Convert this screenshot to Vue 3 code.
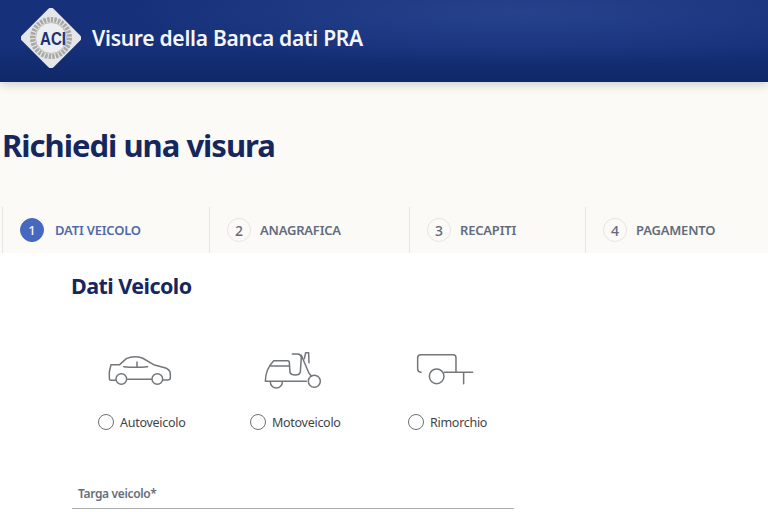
<script setup>
const steps = [
  { n: 1, label: 'DATI VEICOLO', active: true },
  { n: 2, label: 'ANAGRAFICA' },
  { n: 3, label: 'RECAPITI' },
  { n: 4, label: 'PAGAMENTO' }
]
</script>

<template>
  <div class="page">
    <header class="top">
      <svg class="logo" viewBox="0 0 60 60" width="60" height="60" aria-hidden="true">
        <rect x="7.5" y="7.5" width="45" height="45" rx="4" transform="rotate(45 30 30)" fill="#e4e6ea" />
        <circle cx="30" cy="30" r="18.5" fill="none" stroke="#a8a8a4" stroke-width="5" stroke-dasharray="2.4 1.2" />
        <circle cx="30" cy="30" r="15.5" fill="#eceef0" stroke="#bdbdb9" stroke-width="1" />
        <text x="32" y="36.5" class="logo-text" text-anchor="middle" textLength="26" lengthAdjust="spacingAndGlyphs">ACI</text>
      </svg>
      <span class="brand">Visure della Banca dati PRA</span>
    </header>

    <section class="intro">
      <h1>Richiedi una visura</h1>
      <nav class="steps">
        <div v-for="s in steps" :key="s.n" class="step" :class="{ active: s.active }">
          <span class="num">{{ s.n }}</span>
          <span class="lbl">{{ s.label }}</span>
        </div>
      </nav>
    </section>

    <main class="main">
      <h2>Dati Veicolo</h2>
      <div class="types">
        <label class="type">
          <svg class="ico" viewBox="50 38 198 96" width="66" height="32" fill="none" stroke="#73767a" stroke-width="4.5" stroke-linejoin="round" stroke-linecap="round">
            <path d="M76 117H62Q57 117 57 111V92L62 70H88L108 52Q130 42 156 50L190 70L226 80Q240 86 240 98V110Q240 116 232 116H219M111 114H183" />
            <circle cx="93" cy="113" r="16" />
            <circle cx="201" cy="113" r="16" />
            <path d="M100 76Q135 80 172 76M140 62V76" />
          </svg>
          <span class="pick"><i class="radio"></i><span>Autoveicolo</span></span>
        </label>
        <label class="type moto">
          <svg class="ico" viewBox="68 28 180 118" width="60" height="39.3" fill="none" stroke="#73767a" stroke-width="4.5" stroke-linejoin="round" stroke-linecap="round">
            <path d="M75 122Q75 86 100 60H142Q147 60 147 66L149 96Q152 103 165 103Q178 103 180 94L183 50Q181 40 172 40H156M183 44L206 98L213 106M75 122H198" />
            <path d="M90 76H146M192 54L196 36H205L206 66" />
            <path d="M90 124A18 18 0 0 0 126 124" />
            <circle cx="222" cy="122" r="18" />
          </svg>
          <span class="pick"><i class="radio"></i><span>Motoveicolo</span></span>
        </label>
        <label class="type trailer">
          <svg class="ico" viewBox="50 38 175 96" width="58.3" height="32" fill="none" stroke="#73767a" stroke-width="4.5" stroke-linejoin="round" stroke-linecap="round">
            <path d="M65 96Q55 94 55 86V52Q55 43 64 43H162Q170 43 170 52V96" />
            <path d="M135 96H220M193 96V130" />
            <circle cx="112" cy="108" r="22" />
          </svg>
          <span class="pick"><i class="radio"></i><span>Rimorchio</span></span>
        </label>
      </div>
      <div class="field"><span>Targa veicolo*</span></div>
    </main>
  </div>
</template>

<style scoped>
.page {
  width: 768px;
  height: 512px;
  overflow: hidden;
  background: #fff;
  font-family: "Noto Sans", "Open Sans", sans-serif;
}
.top {
  height: 82px;
  box-sizing: border-box;
  padding-left: 21px;
  display: flex;
  align-items: center;
  gap: 11px;
  background:
    radial-gradient(ellipse 400px 55px at 520px 12px, rgba(62, 92, 165, 0.42), rgba(62, 92, 165, 0) 100%),
    linear-gradient(#17307a, #16307a 55%, #0f2868);
  box-shadow: 0 2px 10px rgba(60, 60, 60, 0.25);
  position: relative;
}
.logo { flex: none; margin-top: -6px; }
.logo-text {
  font: 700 18px "Liberation Sans", sans-serif;
  fill: #1b3272;
}
.brand {
  color: #f4f6fa;
  font-size: 21px;
  font-weight: 600;
  letter-spacing: -0.27px;
  margin-top: -6px;
}
.intro {
  height: 171px;
  box-sizing: border-box;
  padding-top: 42px;
  background: #fbfaf6;
  display: flex;
  flex-direction: column;
}
h1 {
  margin: 0 0 0 2px;
  height: 42px;
  line-height: 42px;
  font-size: 31px;
  font-weight: 700;
  letter-spacing: -1px;
  color: #16275e;
}
.steps {
  margin-top: auto;
  padding-left: 2px;
  height: 46px;
  display: grid;
  grid-template-columns: 207px 200px 176px 1fr;
}
.step {
  border-left: 1px solid #e7e6e2;
  padding-left: 17px;
  display: flex;
  align-items: center;
  gap: 9px;
  color: #626b7c;
  font-size: 13px;
  font-weight: 600;
  letter-spacing: -0.2px;
}
.num {
  width: 22px;
  height: 22px;
  border: 1px solid #e6e5e1;
  border-radius: 50%;
  display: flex;
  align-items: center;
  justify-content: center;
  font-size: 14px;
  font-weight: 500;
  letter-spacing: 0;
}
.step.active { gap: 11px; color: #4f6aaa; }
.step.active .num {
  background: #4669bf;
  border-color: #4669bf;
  color: #f2f5fb;
  font-size: 13px;
}
.main { padding: 20px 0 0 71px; }
h2 {
  margin: 0;
  height: 26px;
  line-height: 26px;
  font-size: 21.5px;
  font-weight: 700;
  letter-spacing: -0.55px;
  color: #16275e;
}
.types {
  margin: 0 0 0 27px;
  padding-top: 55px;
  display: grid;
  grid-template-columns: 152px 158px auto;
}
.type { display: flex; flex-direction: column; height: 77px; }
.ico { display: block; margin: 0 0 0 9px; flex: none; }
.moto .ico { margin: -4px 0 0 13px; }
.trailer .ico { margin: -1px 0 0 8px; }
.pick {
  margin-top: auto;
  display: flex;
  align-items: center;
  gap: 6px;
  height: 18px;
  font-size: 12.5px;
  letter-spacing: -0.28px;
  color: #3f4348;
}
.radio {
  box-sizing: border-box;
  width: 16px;
  height: 16px;
  border: 1.5px solid #6d7074;
  border-radius: 50%;
  flex: none;
}
.field {
  margin-top: 48px;
  margin-left: 1px;
  width: 442px;
  height: 30px;
  box-sizing: border-box;
  padding: 6px 0 0 6px;
  border-bottom: 1px solid #a9abae;
  color: #666d7a;
  font-size: 12px;
  font-weight: 600;
  letter-spacing: -0.35px;
  line-height: 18px;
}
</style>

<style>
html, body { margin: 0; background: #fff; overflow: hidden; }
</style>
